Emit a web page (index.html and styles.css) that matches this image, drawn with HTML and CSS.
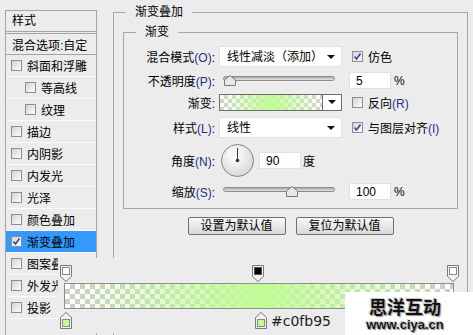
FILE: index.html
```html
<!DOCTYPE html>
<html lang="zh-CN">
<head>
    <meta charset="UTF-8">
    <meta name="viewport" content="width=device-width, initial-scale=1.0">
    <title>图层样式 - 渐变叠加</title>
    <link rel="stylesheet" href="styles.css">
</head>
<body>
    <div class="dialog">
        <!-- Styles list -->
        <div class="styles-panel">
            <div class="panel-head">样式</div>
            <div class="panel-row blend">混合选项:自定</div>
            <div class="panel-row"><span class="check"></span>斜面和浮雕</div>
            <div class="panel-row sub"><span class="check"></span>等高线</div>
            <div class="panel-row sub"><span class="check"></span>纹理</div>
            <div class="panel-row"><span class="check"></span>描边</div>
            <div class="panel-row"><span class="check"></span>内阴影</div>
            <div class="panel-row"><span class="check"></span>内发光</div>
            <div class="panel-row"><span class="check"></span>光泽</div>
            <div class="panel-row"><span class="check"></span>颜色叠加</div>
            <div class="panel-row active"><span class="check"><svg viewBox="0 0 9 9" width="9" height="9"><path d="M1.5 4.5 L3.5 7 L7.5 1.5" fill="none" stroke="#34489e" stroke-width="1.6"/></svg></span>渐变叠加</div>
            <div class="panel-row"><span class="check"></span>图案叠加</div>
            <div class="panel-row"><span class="check"></span>外发光</div>
            <div class="panel-row"><span class="check"></span>投影</div>
        </div>

        <!-- Gradient overlay settings -->
        <div class="main">
            <fieldset class="group outer">
                <legend>渐变叠加</legend>
                <fieldset class="group inner">
                    <legend>渐变</legend>

                    <div class="row h21">
                        <label class="label">混合模式<span class="key">(O)</span>:</label>
                        <div class="select">线性减淡（添加）<span class="caret"></span></div>
                        <span class="check on"><svg viewBox="0 0 9 9" width="9" height="9"><path d="M1.5 4.5 L3.5 7 L7.5 1.5" fill="none" stroke="#34489e" stroke-width="1.6"/></svg></span>
                        <span class="check-label">仿色</span>
                    </div>

                    <div class="row h17 gap5">
                        <label class="label">不透明度<span class="key">(P)</span>:</label>
                        <div class="slider">
                            <div class="track"></div>
                            <svg class="thumb" style="left: 1px" viewBox="0 0 12 11" width="12" height="11"><path d="M6 0.5 L11.5 5 V10.5 H0.5 V5 Z" fill="#e6e6e6" stroke="#7a7a7a"/></svg>
                        </div>
                        <div class="num">5</div>
                        <span class="unit">%</span>
                    </div>

                    <div class="row h17 gap5">
                        <label class="label">渐变:</label>
                        <div class="grad-pick">
                            <div class="grad-swatch"></div>
                            <div class="pick-btn"><span class="caret"></span></div>
                        </div>
                        <span class="check"></span>
                        <span class="check-label">反向<span class="key">(R)</span></span>
                    </div>

                    <div class="row h21 gap6">
                        <label class="label">样式<span class="key">(L)</span>:</label>
                        <div class="select">线性<span class="caret"></span></div>
                        <span class="check on"><svg viewBox="0 0 9 9" width="9" height="9"><path d="M1.5 4.5 L3.5 7 L7.5 1.5" fill="none" stroke="#34489e" stroke-width="1.6"/></svg></span>
                        <span class="check-label">与图层对齐<span class="key">(I)</span></span>
                    </div>

                    <div class="row h33 gap6">
                        <label class="label">角度<span class="key">(N)</span>:</label>
                        <svg class="dial" viewBox="0 0 33 33" width="33" height="33">
                            <defs>
                                <radialGradient id="dialFill" cx="40%" cy="35%" r="70%">
                                    <stop offset="0" stop-color="#ffffff"/>
                                    <stop offset="1" stop-color="#d6d6d6"/>
                                </radialGradient>
                            </defs>
                            <circle cx="16.5" cy="16.5" r="16" fill="url(#dialFill)" stroke="#858585"/>
                            <line x1="16.5" y1="16.5" x2="16.5" y2="4" stroke="#3a3a3a" stroke-width="1"/>
                            <circle cx="16.5" cy="16.5" r="1.8" fill="#333"/>
                        </svg>
                        <div class="num">90</div>
                        <span class="unit">度</span>
                    </div>

                    <div class="row h17 gap6">
                        <label class="label">缩放<span class="key">(S)</span>:</label>
                        <div class="slider">
                            <div class="track"></div>
                            <svg class="thumb" style="left: 63px" viewBox="0 0 12 11" width="12" height="11"><path d="M6 0.5 L11.5 5 V10.5 H0.5 V5 Z" fill="#e6e6e6" stroke="#7a7a7a"/></svg>
                        </div>
                        <div class="num">100</div>
                        <span class="unit">%</span>
                    </div>
                </fieldset>

                <div class="buttons">
                    <button class="btn">设置为默认值</button>
                    <button class="btn">复位为默认值</button>
                </div>
            </fieldset>
        </div>
    </div>

    <!-- Gradient editor strip lying over the dialog -->
    <div class="grad-editor">
        <div class="stops top">
            <svg class="stop" style="left: 2px" viewBox="0 0 12 17" width="12" height="17"><path d="M0.5 0.5 H11.5 V11.5 L6 16.5 L0.5 11.5 Z" fill="#f2f2f2" stroke="#7a7a7a"/><rect x="2.5" y="2.5" width="7" height="7" fill="#ffffff" stroke="#8a8a8a"/></svg>
            <svg class="stop" style="left: 194px" viewBox="0 0 12 17" width="12" height="17"><path d="M0.5 0.5 H11.5 V11.5 L6 16.5 L0.5 11.5 Z" fill="#f2f2f2" stroke="#7a7a7a"/><rect x="2.5" y="2.5" width="7" height="7" fill="#000000" stroke="#555"/></svg>
            <svg class="stop" style="left: 389px" viewBox="0 0 12 17" width="12" height="17"><path d="M0.5 0.5 H11.5 V11.5 L6 16.5 L0.5 11.5 Z" fill="#f2f2f2" stroke="#7a7a7a"/><rect x="2.5" y="2.5" width="7" height="7" fill="#ffffff" stroke="#8a8a8a"/></svg>
        </div>
        <div class="grad-bar"></div>
        <div class="stops bottom">
            <svg class="stop" style="left: 2px" viewBox="0 0 12 17" width="12" height="17"><path d="M6 0.5 L11.5 5.5 V16.5 H0.5 V5.5 Z" fill="#f2f2f2" stroke="#7a7a7a"/><rect x="2.5" y="7.5" width="7" height="7" fill="#c0fb95" stroke="#8a8a8a"/></svg>
            <div class="stop-current" style="left: 197px">
                <svg viewBox="0 0 12 17" width="12" height="17"><path d="M6 0.5 L11.5 5.5 V16.5 H0.5 V5.5 Z" fill="#f2f2f2" stroke="#7a7a7a"/><rect x="2.5" y="7.5" width="7" height="7" fill="#c0fb95" stroke="#8a8a8a"/></svg>
                <span class="hex">#c0fb95</span>
            </div>
        </div>
    </div>

    <div class="watermark">
        <div class="wm-name">思洋互动</div>
        <div class="wm-url">www.ciya.cn</div>
    </div>
</body>
</html>
```

FILE: styles.css
```css
body {
    margin: 0;
    width: 473px;
    height: 335px;
    overflow: hidden;
    background: #ececec;
    font-family: "Liberation Sans", "Noto Sans CJK SC", sans-serif;
    font-size: 12px;
    color: #000;
    position: relative;
}
.dialog {
    display: flex;
    align-items: flex-start;
}

/* left list */
.styles-panel {
    margin: 10px 0 0 5px;
    width: 90px;
    height: 324px;
    overflow: hidden;
    border: 1px solid #a3a3a3;
    border-bottom: none;
}
.panel-head {
    height: 20px;
    line-height: 20px;
    padding-left: 6px;
    border-bottom: 3px double #a3a3a3;
}
.panel-row {
    display: flex;
    align-items: center;
    height: 21px;
    padding-left: 5px;
    border-bottom: 1px solid #fbfbfb;
    white-space: nowrap;
    overflow: hidden;
}
.panel-row.blend {
    height: 20px;
    padding-left: 6px;
    border-bottom-color: #a3a3a3;
}
.panel-row.sub {
    padding-left: 19px;
}
.panel-row.active {
    background: #3399ff;
}
.check {
    flex: none;
    width: 9px;
    height: 9px;
    border: 1px solid #8e8e8e;
    background: linear-gradient(135deg, #d4d4d4, #fdfdfd);
    margin-right: 5px;
    display: flex;
}
.check svg {
    display: block;
}

/* right side */
.main {
    margin: 5px 5px 0 16px;
    flex: 1;
}
.group {
    margin: 0;
    border: 1px solid #a6a6a6;
    min-width: 0;
}
.group legend {
    padding: 0 9px;
    line-height: 14px;
}
.outer {
    box-sizing: border-box;
    padding: 6px 9px 0;
    height: 330px;
    border-bottom: none;
}
.outer > legend {
    margin-left: 3px;
}
.inner {
    padding: 7px 0 8px;
}
.inner > legend {
    margin-left: 12px;
}
.row {
    display: flex;
    align-items: center;
}
.h17 { height: 17px; }
.h21 { height: 21px; }
.h33 { height: 33px; }
.gap5 { margin-top: 5px; }
.gap6 { margin-top: 6px; }
.label {
    width: 91px;
    margin-right: 4px;
    text-align: right;
    white-space: nowrap;
}
.key {
    color: #23318a;
}
.select {
    position: relative;
    flex: none;
    width: 123px;
    height: 21px;
    line-height: 21px;
    padding-left: 7px;
    background: #fff;
    border: 1px solid #e2e2e2;
    box-sizing: border-box;
    margin-right: 10px;
    white-space: nowrap;
}
.caret {
    position: absolute;
    right: 6px;
    top: 8px;
    width: 0;
    height: 0;
    border-left: 4px solid transparent;
    border-right: 4px solid transparent;
    border-top: 4px solid #111;
}
.check-label {
    white-space: nowrap;
}
.slider {
    position: relative;
    width: 112px;
    height: 17px;
    margin-left: 4px;
}
.track {
    margin-top: 4px;
    height: 5px;
    border: 1px solid #8c8c8c;
    border-radius: 3px;
    background: linear-gradient(#a8a8a8, #e4e4e4);
    box-sizing: border-box;
}
.thumb {
    position: absolute;
    top: 3px;
}
.num {
    width: 42px;
    height: 17px;
    line-height: 17px;
    padding-left: 6px;
    box-sizing: border-box;
    background: #fff;
    border: 1px solid #e0e0e0;
    margin-left: 14px;
}
.unit {
    margin-left: 3px;
}
.grad-pick {
    display: flex;
    flex: none;
    width: 123px;
    height: 17px;
    border: 1px solid #6e6e6e;
    box-sizing: border-box;
    margin-right: 10px;
    background: #fff;
}
.grad-swatch {
    flex: 1;
    background:
        linear-gradient(to right, rgba(192, 251, 149, 0), #c0fb95 50%, rgba(192, 251, 149, 0)),
        repeating-conic-gradient(#d2d2d2 0 25%, #ffffff 0 50%) 0 0 / 8px 8px;
}
.pick-btn {
    position: relative;
    width: 18px;
    border-left: 1px solid #6e6e6e;
    background: #fff;
}
.pick-btn .caret {
    right: 5px;
    top: 5px;
}
.dial {
    margin-left: 2px;
    display: block;
}
.h33 .num {
    margin-left: 5px;
}
.h33 .unit {
    margin-left: 2px;
}
.buttons {
    display: flex;
    justify-content: center;
    gap: 10px;
    margin-top: 8px;
}
.btn {
    width: 98px;
    height: 18px;
    padding: 0;
    font: inherit;
    line-height: 16px;
    border: 1px solid #6f6f6f;
    border-radius: 2px;
    background: linear-gradient(#f8f8f8, #d8d8d8);
}

/* gradient editor */
.grad-editor {
    position: absolute;
    left: 58px;
    top: 258px;
    width: 404px;
    height: 75px;
    background: #ececec;
}
.stops {
    position: relative;
    height: 17px;
}
.stops.top {
    margin-top: 7px;
}
.stops.bottom {
    margin-top: 3px;
}
.stop {
    position: absolute;
    top: 0;
}
.grad-bar {
    margin: 1px 0 0 6px;
    width: 390px;
    height: 26px;
    border: 1px solid #8e8e8e;
    box-sizing: border-box;
    background:
        linear-gradient(to right, rgba(192, 251, 149, 0), #c0fb95 50%, rgba(192, 251, 149, 0)),
        repeating-conic-gradient(#cdcdcd 0 25%, #ffffff 0 50%) 0 0 / 10px 10px;
}
.stop-current {
    position: absolute;
    top: 0;
    display: flex;
    align-items: flex-end;
    gap: 4px;
}
.stop-current svg {
    display: block;
}
.hex {
    font-family: "DejaVu Sans", sans-serif;
    font-size: 14px;
    line-height: 16px;
    color: #222;
}

/* watermark */
.watermark {
    position: absolute;
    left: 345px;
    top: 292px;
    width: 128px;
    height: 43px;
    background: #fff;
    text-align: center;
    padding-right: 8px;
    box-sizing: border-box;
    color: #111;
    font-weight: bold;
    text-shadow: 0 0 1px #fff, 1px 1px 1px #888, -1px -1px 1px #bbb;
}
.wm-name {
    margin-top: 5px;
    font-size: 18px;
    line-height: 22px;
    letter-spacing: 0;
}
.wm-url {
    font-size: 13px;
    line-height: 12px;
    font-family: "Liberation Sans", sans-serif;
}
```
